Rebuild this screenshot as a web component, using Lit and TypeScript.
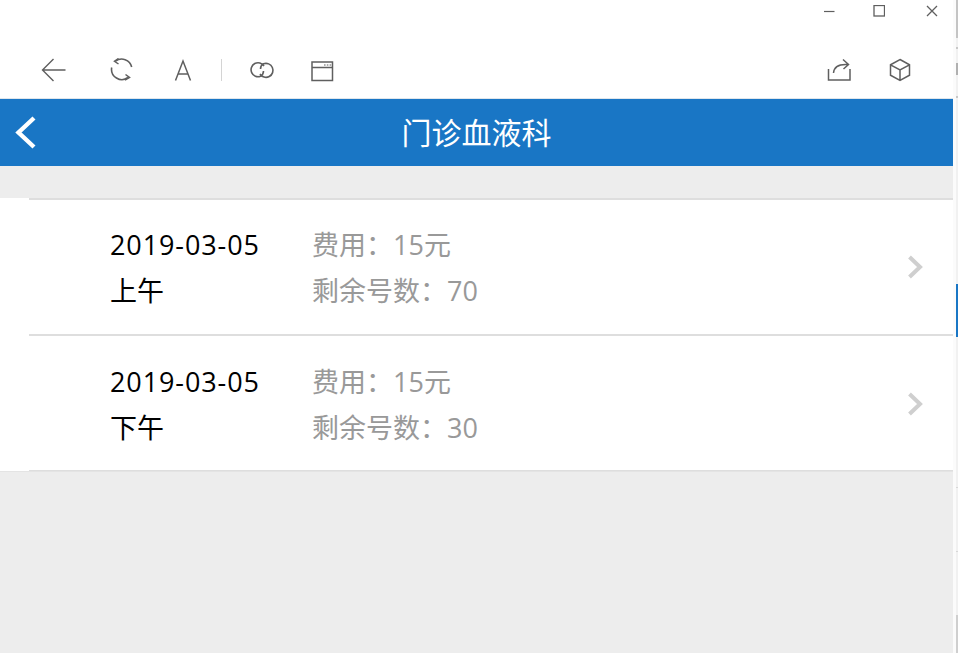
import { LitElement, html, css, svg } from "lit";
import { customElement } from "lit/decorators.js";

const icon = (w: number, h: number, body: unknown, cls = "") =>
  html`<svg class=${cls} width=${w} height=${h} viewBox="0 0 ${w} ${h}" fill="none" stroke="currentColor">${body}</svg>`;

const rows = [
  { date: "2019-03-05", part: "上午", fee: "费用：15元", left: "剩余号数：70" },
  { date: "2019-03-05", part: "下午", fee: "费用：15元", left: "剩余号数：30" },
];

@customElement("app-root")
export class AppRoot extends LitElement {
  static styles = css`
    :host {
      display: flex;
      width: 958px;
      height: 653px;
      overflow: hidden;
      background: #fff;
      font-family: "Open Sans", "Noto Sans CJK SC", sans-serif;
    }
    .main {
      width: 953px;
      display: flex;
      flex-direction: column;
      background: #ededed;
    }
    .top {
      height: 99px;
      box-sizing: border-box;
      background: #fff;
      color: #5f5f5f;
      display: flex;
      flex-direction: column;
      border-bottom: 1px solid #dfe6ec;
    }
    .controls {
      flex: none;
      height: 41px;
      display: flex;
      justify-content: flex-end;
      padding: 5px 15px 0 0;
      gap: 41px;
      box-sizing: border-box;
      align-items: flex-start;
    }
    .min { margin-right: -3px; }
    .toolbar {
      flex: none;
      height: 58px;
      display: flex;
      align-items: center;
      padding: 0 42px 0 41px;
    }
    .spacer { flex: 1; }
    .divider { width: 1px; height: 22px; background: #d4d4d4; }
    .nav {
      height: 67px;
      background: #1976c5;
      color: #fff;
      position: relative;
      display: flex;
      align-items: center;
      justify-content: center;
      font-size: 30px;
      line-height: 67px;
    }
    .nav svg { position: absolute; left: 14px; top: 16px; }
    .list {
      margin-top: 32px;
      background: #fff;
      border-bottom: 1px solid #e4e4e4;
    }
    .row {
      margin-left: 29px;
      height: 136px;
      box-sizing: border-box;
      border-top: 2px solid #dedede;
      display: flex;
      align-items: center;
      padding: 2px 0 0 81px;
      font-size: 27px;
      line-height: 46px;
      color: #000;
    }
    .row + .row { height: 137px; padding-top: 4px; }
    .row:last-child { border-bottom: 1px solid #dedede; }
    .col1 { width: 202px; }
    .col2 { flex: 1; color: #999; }
    .num { letter-spacing: 0.9px; }
    .chev { margin: 0 30px 2px 0; color: #cfcfcf; filter: blur(0.6px); }
    .strip {
      width: 5px;
      display: flex;
      background: #fbfbfb;
    }
    .edge {
      margin-left: 3px;
      width: 2px;
      display: flex;
      flex-direction: column;
      background: #f1f1f1;
    }
    .seg { flex: none; }
  `;

  render() {
    const segs: [number, string][] = [
      [38, "#c4c4c4"], [9, "#f1f1f1"], [2, "#c8c8c8"], [14, "#f1f1f1"], [12, "#b0b0b0"],
      [21, "#f1f1f1"], [2, "#c8c8c8"], [186, "#f1f1f1"], [53, "#1976c5"], [150, "#f1f1f1"],
      [1, "#d8d8d8"], [63, "#f1f1f1"], [1, "#d8d8d8"], [63, "#f1f1f1"], [38, "#cfcfcf"],
    ];
    return html`
      <div class="main">
        <div class="top">
          <div class="controls">
            ${icon(12, 12, svg`<path d="M1 6.5h10.5" stroke-width="1.2"/>`, "min")}
            ${icon(12, 12, svg`<rect x="1" y="0.5" width="10.5" height="10.5" stroke-width="1.3"/>`)}
            ${icon(12, 12, svg`<path d="M1 1l10 10M11 1L1 11" stroke-width="1.3"/>`)}
          </div>
          <div class="toolbar">
            ${icon(25, 26, svg`<path d="M1.5 13H24.5M12.5 2L1.5 13L12.5 24" stroke-width="1.4"/>`)}
            <span style="width:44px"></span>
            ${icon(24, 24, svg`<path d="M5.5 3.2A10.3 10.3 0 0 1 21.7 9M1.7 9.5A10.3 10.3 0 0 0 18 19.5" stroke-width="1.6"/><path d="M8.5 0.5L4.5 3.3L8.5 6M15.5 16.5L19.5 19.5L15 22" stroke-width="1.5"/>`)}
            <span style="width:39px"></span>
            ${icon(20, 24, svg`<path d="M2.5 22.5L10 3L17.5 22.5M5 16H15" stroke-width="1.5"/>`)}
            <span style="width:28px"></span>
            <span class="divider"></span>
            <span style="width:27px"></span>
            ${icon(26, 18, svg`<path d="M15 5A7 7 0 1 0 11.5 15.3Q14.5 13.5 14.5 10" stroke-width="1.6"/><path d="M11 13A7 7 0 1 0 14.5 2.8Q11.5 4.5 11.5 8" stroke-width="1.6"/>`)}
            <span style="width:35px"></span>
            ${icon(24, 24, svg`<rect x="2" y="4" width="20.5" height="18.5" stroke-width="1.5"/><path d="M2 9.5H22.5" stroke-width="1.5"/><path d="M14 7h1.6M16.8 7h1.6M19.6 7h1.6" stroke-width="1"/>`)}
            <span class="spacer"></span>
            ${icon(25, 24, svg`<path d="M1.5 11V22H23V11" stroke-width="1.5"/><path d="M6.5 15C7 9 12 6 20.5 6.5M16 1.5L21.5 6.5L16.5 11" stroke-width="1.5"/>`)}
            <span style="width:37px"></span>
            ${icon(22, 24, svg`<path d="M11 1.5L20.5 6.8V17.2L11 22.5L1.5 17.2V6.8ZM1.5 6.8L11 12L20.5 6.8M11 12V22.5" stroke-width="1.5"/>`)}
          </div>
        </div>
        <div class="nav">
          ${icon(24, 36, svg`<path d="M20 3L4.5 17.5L20 32" stroke-width="4.4"/>`)}
          <span>门诊血液科</span>
        </div>
        <div class="list">
          ${rows.map(
            (r) => html`<div class="row">
              <div class="col1"><div class="num">${r.date}</div><div>${r.part}</div></div>
              <div class="col2"><div>${r.fee}</div><div>${r.left}</div></div>
              ${icon(16, 26, svg`<path d="M2.5 3L13 13L2.5 23" stroke-width="4"/>`, "chev")}
            </div>`
          )}
        </div>
      </div>
      <div class="strip">
        <div class="edge">
          ${segs.map(([h, c]) => html`<div class="seg" style="height:${h}px;background:${c}"></div>`)}
        </div>
      </div>
    `;
  }
}
